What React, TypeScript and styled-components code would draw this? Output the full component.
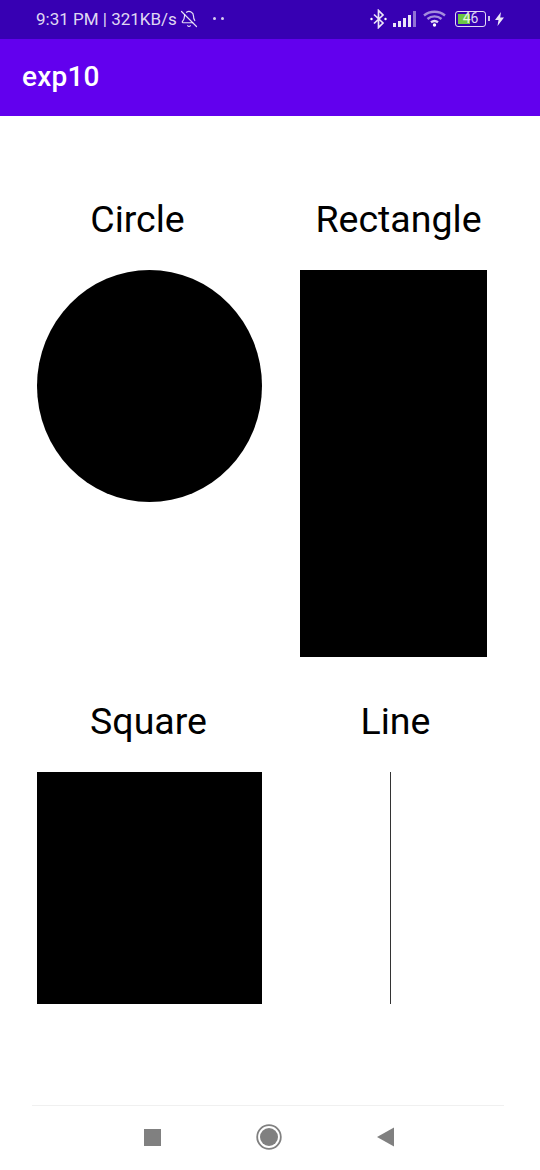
import styled, { createGlobalStyle } from "styled-components"
import { BellOff } from "lucide-react"

const GlobalStyle = createGlobalStyle`
  html, body {
    margin: 0;
    padding: 0;
    background: #fff;
    font-family: Roboto, "Liberation Sans", sans-serif;
  }
`

const Page = styled.div`
  width: 540px;
  height: 1170px;
  display: flex;
  flex-direction: column;
  overflow: hidden;
`

// status bar
const StatusBar = styled.div`
  height: 39px;
  flex: none;
  background: #3700b3;
  color: rgba(255, 255, 255, 0.86);
  display: flex;
  align-items: center;
  padding: 0 36px 2px;
  box-sizing: border-box;
  font-size: 17px;
`

const StatusText = styled.span`
  white-space: nowrap;
`

const MuteIcon = styled(BellOff)`
  margin-left: 3px;
  flex: none;
`

const Dots = styled.span`
  display: flex;
  gap: 5px;
  margin-left: 15px;

  i {
    width: 3px;
    height: 3px;
    border-radius: 50%;
    background: rgba(255, 255, 255, 0.8);
  }
`

const StatusIcons = styled.div`
  margin-left: auto;
  display: flex;
  align-items: center;
  gap: 6px;
`

const Battery = styled.div`
  position: relative;
  width: 31px;
  height: 16px;
  border: 1.5px solid rgba(255, 255, 255, 0.85);
  border-radius: 3px;
  box-sizing: border-box;
  font-size: 14px;
  line-height: 13px;
  text-align: center;
  color: rgba(255, 255, 255, 0.85);
  margin: 0 3px 0 2px;

  &::before {
    content: "";
    position: absolute;
    left: 2px;
    top: 2px;
    bottom: 2px;
    width: 12px;
    background: #6cc644;
  }

  &::after {
    content: "";
    position: absolute;
    right: -4.5px;
    top: 4px;
    width: 2px;
    height: 5px;
    background: rgba(255, 255, 255, 0.75);
  }

  span {
    position: relative;
  }
`

const AppBar = styled.header`
  height: 77px;
  flex: none;
  background: #6200ee;
  color: #fff;
  display: flex;
  align-items: center;
  padding: 0 22px 3px;
  box-sizing: border-box;
  font-size: 28px;
  font-weight: 500;
  letter-spacing: 0.2px;
`

// shapes
const Content = styled.main`
  flex: 1;
  padding: 82px 0 0 37px;
  display: grid;
  grid-template-columns: 225px 187px;
  grid-auto-rows: max-content;
  column-gap: 38px;
  row-gap: 43px;
`

const Cell = styled.section`
  display: flex;
  flex-direction: column;
`

const Label = styled.h2<{ $shift: number }>`
  margin: 0 0 30px;
  height: 42px;
  line-height: 42px;
  font-size: 37.5px;
  font-weight: 400;
  color: #000;
  text-align: center;
  white-space: nowrap;
  transform: translateX(${({ $shift }) => $shift}px);
`

const Circle = styled.div`
  width: 225px;
  height: 232px;
  border-radius: 50%;
  background: #000;
`

const Rectangle = styled.div`
  width: 187px;
  height: 387px;
  background: #000;
`

const Square = styled.div`
  width: 225px;
  height: 232px;
  background: #000;
`

const Line = styled.div`
  width: 1px;
  height: 232px;
  margin-left: 90px;
  background: #333;
`

// nav bar
const NavBar = styled.nav`
  height: 65px;
  flex: none;
  margin: 0 36px 0 32px;
  padding: 0 0 2px 2px;
  border-top: 1px solid #f0f0f0;
  display: flex;
  align-items: center;
  justify-content: center;
  box-sizing: border-box;
`

const NavSlot = styled.div`
  width: 116.5px;
  display: flex;
  justify-content: center;
  align-items: center;
`

const BluetoothIcon = () => (
  <svg width="17" height="20" viewBox="0 0 17 20" fill="none" stroke="#fff" strokeOpacity="0.9" strokeWidth="1.7">
    <path d="M4 5.5l9 8.5-4.5 4.5V1.5L13 6l-9 8.5" />
    <circle cx="1.5" cy="10" r="1.2" fill="#fff" stroke="none" />
    <circle cx="15.5" cy="10" r="1.2" fill="#fff" stroke="none" />
  </svg>
)

const SignalIcon = () => (
  <svg width="24" height="16" viewBox="0 0 24 16" fill="#fff">
    <rect x="0" y="12" width="3" height="4" fillOpacity="0.9" />
    <rect x="5" y="10" width="3" height="6" fillOpacity="0.9" />
    <rect x="10" y="7" width="3" height="9" fillOpacity="0.9" />
    <rect x="15" y="4" width="3" height="12" fillOpacity="0.9" />
    <rect x="20" y="0" width="3" height="16" fillOpacity="0.45" />
  </svg>
)

const WifiIcon = () => (
  <svg width="24" height="17" viewBox="0 0 24 17" fill="none" stroke="#fff" strokeWidth="2.4">
    <path d="M1 5.5C7 .5 16 .5 22 5.5" strokeOpacity="0.55" />
    <path d="M4.5 9C8.500 5.500 14.500 5.500 18.500 9" strokeOpacity="0.55" />
    <path d="M8 12.300C10 10.800 13 10.800 15 12.300" strokeOpacity="0.85" />
    <circle cx="11.500" cy="15" r="1.700" fill="#fff" stroke="none" />
  </svg>
)

const BoltIcon = () => (
  <svg width="9" height="14" viewBox="0 0 9 14" fill="#fff" fillOpacity="0.9">
    <path d="M6 0L0 8h3.500L2.500 14 9 5.500H5.200z" />
  </svg>
)

const SquareIcon = () => (
  <svg width="17" height="17" viewBox="0 0 17 17">
    <rect width="17" height="17" fill="#808080" />
  </svg>
)

const HomeIcon = () => (
  <svg width="26" height="26" viewBox="0 0 26 26">
    <circle cx="13" cy="13" r="11.800" fill="none" stroke="#808080" strokeWidth="1.800" />
    <circle cx="13" cy="13" r="9" fill="#808080" />
  </svg>
)

const BackIcon = () => (
  <svg width="17" height="20" viewBox="0 0 17 20">
    <path d="M17 0.500V19.500L0 10z" fill="#808080" />
  </svg>
)

export default function App() {
  return (
    <Page>
      <GlobalStyle />
      <StatusBar>
        <StatusText>9:31 PM | 321KB/s</StatusText>
        <MuteIcon size={18} strokeWidth={1.6} />
        <Dots>
          <i />
          <i />
        </Dots>
        <StatusIcons>
          <BluetoothIcon />
          <SignalIcon />
          <WifiIcon />
          <Battery>
            <span>46</span>
          </Battery>
          <BoltIcon />
        </StatusIcons>
      </StatusBar>
      <AppBar>exp10</AppBar>
      <Content>
        <Cell>
          <Label $shift={-12}>Circle</Label>
          <Circle />
        </Cell>
        <Cell>
          <Label $shift={5}>Rectangle</Label>
          <Rectangle />
        </Cell>
        <Cell>
          <Label $shift={-1}>Square</Label>
          <Square />
        </Cell>
        <Cell>
          <Label $shift={2}>Line</Label>
          <Line />
        </Cell>
      </Content>
      <NavBar>
        <NavSlot>
          <SquareIcon />
        </NavSlot>
        <NavSlot>
          <HomeIcon />
        </NavSlot>
        <NavSlot>
          <BackIcon />
        </NavSlot>
      </NavBar>
    </Page>
  )
}
